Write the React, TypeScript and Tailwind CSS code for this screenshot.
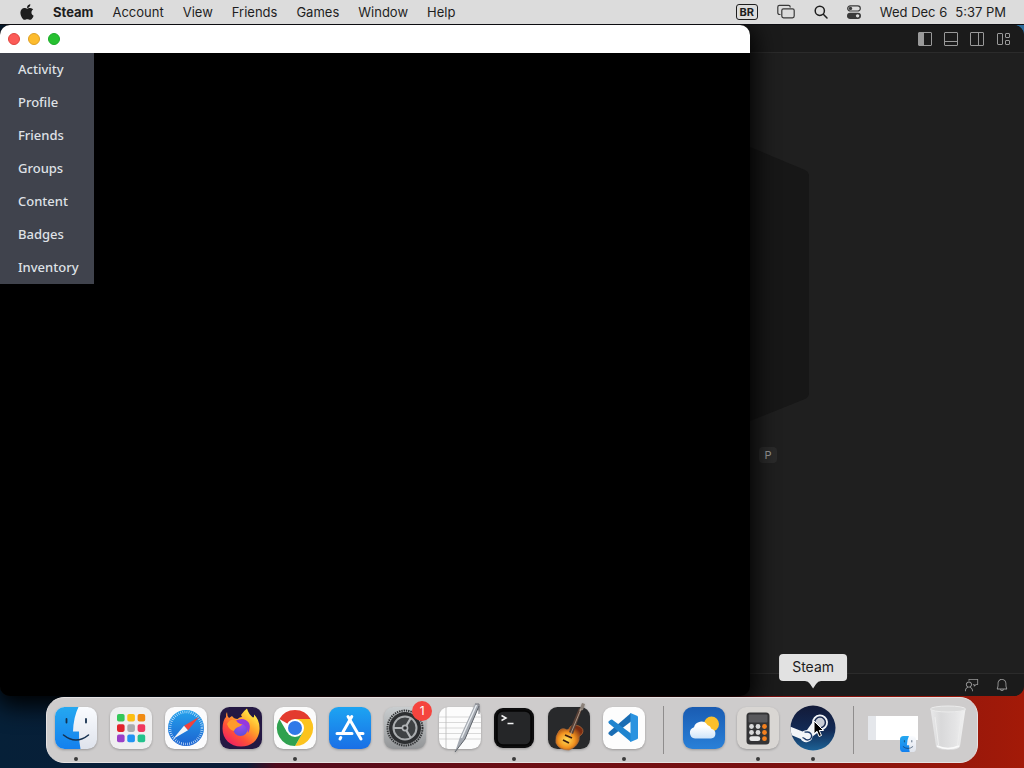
import React from "react";
import { FaApple } from "react-icons/fa";
import {
    VscBell,
    VscFeedback,
    VscLayout,
    VscLayoutPanelOff,
    VscLayoutSidebarLeft,
    VscLayoutSidebarRightOff,
} from "react-icons/vsc";

interface DockApp {
    name: string;
    icon: React.ReactNode;
    running?: boolean;
    badge?: number;
    tooltip?: boolean;
}

const menus = ["Account", "View", "Friends", "Games", "Window", "Help"];
const profileLinks = ["Activity", "Profile", "Friends", "Groups", "Content", "Badges", "Inventory"];

const iconClass = "w-[42px] h-[42px] overflow-visible drop-shadow-[0_1px_1px_rgba(0,0,0,0.25)]";

const FinderIcon = ({ className = iconClass }: { className?: string }) => (
    <svg viewBox="0 0 42 42" className={className}>
        <defs>
            <linearGradient id="finder-blue" x1="0" y1="0" x2="0" y2="1">
                <stop offset="0" stopColor="#25a8f0" />
                <stop offset="1" stopColor="#1480ee" />
            </linearGradient>
            <linearGradient id="finder-white" x1="0" y1="0" x2="0" y2="1">
                <stop offset="0" stopColor="#fafcff" />
                <stop offset="1" stopColor="#dfe3ec" />
            </linearGradient>
        </defs>
        <rect width="42" height="42" rx="9.5" fill="url(#finder-white)" />
        <path d="M9.5 0H23.5Q18.5 10 18 24.5H24Q23.5 33 25.5 42H9.5A9.5 9.5 0 0 1 0 32.5V9.5A9.5 9.5 0 0 1 9.5 0Z" fill="url(#finder-blue)" />
        <path d="M11.5 12v3.5M31 12v3.5" stroke="#15304f" strokeWidth="1.8" strokeLinecap="round" />
        <path d="M8.5 28Q21 38 33.5 28" fill="none" stroke="#15304f" strokeWidth="1.6" strokeLinecap="round" />
    </svg>
);

const launchpadColors = ["#35c759", "#fcbf12", "#f08a12", "#e2232c", "#a9abad", "#f0385f", "#9a3fc8", "#2193f3", "#22c28c"];

const LaunchpadIcon = () => (
    <svg viewBox="0 0 42 42" className={iconClass}>
        <rect width="42" height="42" rx="9.5" fill="#efeff0" />
        {launchpadColors.map((color, i) => (
            <rect key={color} x={7 + (i % 3) * 10.3} y={7 + Math.floor(i / 3) * 10.3} width="7.6" height="7.6" rx="1.8" fill={color} />
        ))}
    </svg>
);

const SafariIcon = () => (
    <svg viewBox="0 0 42 42" className={iconClass}>
        <defs>
            <linearGradient id="safari" x1="0" y1="0" x2="0" y2="1">
                <stop offset="0" stopColor="#25a2ec" />
                <stop offset="1" stopColor="#1b62d0" />
            </linearGradient>
        </defs>
        <rect width="42" height="42" rx="9.5" fill="#fbfbfc" />
        <circle cx="21" cy="21" r="18" fill="url(#safari)" />
        <circle cx="21" cy="21" r="16" fill="none" stroke="#e6f3ff" strokeWidth="2.6" strokeDasharray="0.6 1.5" />
        <path d="M34 10 23 23.3 19 18.7Z" fill="#f0413c" />
        <path d="M8 32 19 18.7 23 23.3Z" fill="#f3f5f7" />
    </svg>
);

const FirefoxIcon = () => (
    <svg viewBox="0 0 42 42" className={iconClass}>
        <defs>
            <linearGradient id="fox" x1="0.85" y1="0.1" x2="0.2" y2="0.95">
                <stop offset="0" stopColor="#fff04a" />
                <stop offset="0.35" stopColor="#ffa62a" />
                <stop offset="0.68" stopColor="#ff5138" />
                <stop offset="1" stopColor="#ef2060" />
            </linearGradient>
            <radialGradient id="globe" cx="0.5" cy="0.25" r="0.8">
                <stop offset="0" stopColor="#a24cf2" />
                <stop offset="1" stopColor="#5a4fd8" />
            </radialGradient>
        </defs>
        <rect width="42" height="42" rx="9.5" fill="#241843" />
        <path d="M7 5Q7 9 9 11L12 9Q14 12 17.500 12Q19.500 10 22 10L21 8Q23.500 4 27 1.500Q28.500 7 33 10.500Q34.500 10 34 7.500Q40 13 39.500 22.500C39 33.500 31 39.500 21 39.500C10 39.500 2.500 32 2.500 21.500C2.500 16 4 12 6 10Q5.500 7 7 5Z" fill="url(#fox)" />
        <circle cx="20.500" cy="21.500" r="7.500" fill="url(#globe)" />
        <path d="M7 17Q10 12 14 13L18 15.500Q20 17 22.500 17Q21 19.500 17 20.500Q14.500 21.500 14 24Q9 23 7 17Z" fill="#ff9a2c" />
        <path d="M16 13.500Q24 9.500 29 16Q31 21 28 26Q27.500 20 23.500 17.500Q20.500 17.500 18 15.500Z" fill="#9638dd" />
    </svg>
);

const ChromeIcon = () => (
    <svg viewBox="0 0 42 42" className={iconClass}>
        <rect width="42" height="42" rx="9.5" fill="#fbfbfb" />
        <path d="M21 21 5.400 12A18 18 0 0 1 36.600 12Z" fill="#e33b2e" />
        <path d="M21 12H36.600A18 18 0 0 1 21 39L28.800 25.500Z" fill="#fcc31e" />
        <path d="M5.400 12A18 18 0 0 0 21 39L28.800 25.500 21 21 13.200 25.500Z" fill="#2fa14f" />
        <circle cx="21" cy="21" r="9" fill="#fff" />
        <circle cx="21" cy="21" r="7" fill="#3079e8" />
    </svg>
);

const AppStoreIcon = () => (
    <svg viewBox="0 0 42 42" className={iconClass}>
        <defs>
            <linearGradient id="store" x1="0" y1="0" x2="0" y2="1">
                <stop offset="0" stopColor="#1ca4f2" />
                <stop offset="1" stopColor="#1a6fe6" />
            </linearGradient>
        </defs>
        <rect width="42" height="42" rx="9.5" fill="url(#store)" />
        <g stroke="#fff" strokeWidth="3" strokeLinecap="round" fill="none">
            <path d="M22.800 9.500 14 25M19 9.500 32 32" />
            <path d="M8 26.500H23M29.500 26.500H34" />
            <path d="M11.800 30.500 11 32" />
        </g>
    </svg>
);

const SettingsIcon = () => (
    <svg viewBox="0 0 42 42" className={iconClass}>
        <defs>
            <linearGradient id="settings" x1="0" y1="0" x2="0" y2="1">
                <stop offset="0" stopColor="#c9cdcf" />
                <stop offset="1" stopColor="#939597" />
            </linearGradient>
        </defs>
        <rect width="42" height="42" rx="9.5" fill="url(#settings)" />
        <circle cx="21" cy="21" r="17.500" fill="none" stroke="#303234" strokeWidth="2" strokeDasharray="1.4 0.9" />
        <circle cx="21" cy="21" r="16" fill="#2c2e30" />
        <circle cx="21" cy="21" r="11.500" fill="#3e4143" stroke="#a9acae" strokeWidth="2" />
        <path d="M21 21H9.500M21 21 26.800 11M21 21 26.800 31" stroke="#b0b3b5" strokeWidth="2.200" />
        <circle cx="21" cy="21" r="2.600" fill="#2c2e30" stroke="#b0b3b5" strokeWidth="1.600" />
    </svg>
);

const TextEditIcon = () => (
    <svg viewBox="0 0 42 42" className={iconClass}>
        <rect width="42" height="42" rx="9.5" fill="#fcfcfc" />
        <path d="M0 10H42M0 15.500H42M0 21H42M0 26.500H42M0 32H42" stroke="#cfcfcf" strokeWidth="0.8" />
        <path d="M7 0V42" stroke="#b9b9b9" strokeWidth="0.8" />
        <path d="M36 -3 40 -1 26 32 16 45 21 30Z" fill="#a4a9b1" />
        <path d="M37.500 -2 22.500 31" stroke="#e9edf1" strokeWidth="1.300" />
        <path d="M40 -1 26 32 16 45" fill="none" stroke="#5d6269" strokeWidth="1" />
        <path d="M36 -3 40 -3 40 7" fill="none" stroke="#747981" strokeWidth="1" />
    </svg>
);

const TerminalIcon = () => (
    <svg viewBox="0 0 42 42" className={iconClass}>
        <rect x="1" y="1" width="40" height="40" rx="9" fill="#0d0d0e" />
        <rect x="4" y="4" width="34" height="34" rx="6" fill="#252628" stroke="#050505" strokeWidth="1.500" />
        <path d="M8.500 8.500 13 11 8.500 13.500M14.500 16.500H20.500" fill="none" stroke="#f3f3f3" strokeWidth="1.500" />
    </svg>
);

const GarageBandIcon = () => (
    <svg viewBox="0 0 42 42" className={iconClass}>
        <defs>
            <radialGradient id="guitar" cx="0.4" cy="0.6" r="0.6">
                <stop offset="0" stopColor="#ffe05a" />
                <stop offset="0.5" stopColor="#f39420" />
                <stop offset="1" stopColor="#7a2c12" />
            </radialGradient>
        </defs>
        <rect width="42" height="42" rx="9.5" fill="#28292b" />
        <path d="M11 24Q14 20 19 23Q22 22 22 20Q25 17 31 19Q37 22 34 27Q30 29 31 33Q29 40 21 43Q11 43 8 36Q7 29 11 24Z" fill="url(#guitar)" stroke="#b7703a" strokeWidth="0.7" />
        <path d="M31 1 34 2 25 27 21 25Z" fill="#594137" />
        <path d="M34 -4 37 -3 35 3 31 4Z" fill="#8b8179" />
        <path d="M33 2 21 31" stroke="#c7b9a7" strokeWidth="0.7" />
        <path d="M17 28 24 31M15 33 21 36" stroke="#3b1c10" strokeWidth="1.800" />
    </svg>
);

const CodeIcon = () => (
    <svg viewBox="0 0 42 42" className={iconClass}>
        <rect width="42" height="42" rx="9.5" fill="#fdfdfd" />
        <path d="M28 6V14.500L9 29Q8 29.500 5.500 27Q5 26 6 25Z" fill="#1a6db4" />
        <path d="M28 35V26.500L9 12.500Q8 12 5.500 14.500Q5 15.500 6 16.500Z" fill="#1f84cf" />
        <path d="M27.500 6 34.500 9Q35 9.500 35 10.500V30.500Q35 31.500 34.500 32L27.500 35Z" fill="#2b93e0" />
    </svg>
);

const WeatherIcon = () => (
    <svg viewBox="0 0 42 42" className={iconClass}>
        <defs>
            <linearGradient id="sky" x1="0" y1="0" x2="0" y2="1">
                <stop offset="0" stopColor="#1a5cb2" />
                <stop offset="1" stopColor="#2980d8" />
            </linearGradient>
            <linearGradient id="cloud" x1="0" y1="0" x2="0" y2="1">
                <stop offset="0.3" stopColor="#fff" />
                <stop offset="1" stopColor="#cfe5fa" />
            </linearGradient>
        </defs>
        <rect width="42" height="42" rx="9.5" fill="url(#sky)" />
        <circle cx="28.500" cy="17" r="7.500" fill="#fbc02c" />
        <path d="M12 31.500A5.800 5.800 0 0 1 11 20.200A7.500 7.500 0 0 1 24.500 18A6 6 0 0 1 28.500 22A4.800 4.800 0 0 1 28 31.500Z" fill="url(#cloud)" />
    </svg>
);

const CalculatorIcon = () => (
    <svg viewBox="0 0 42 42" className={iconClass}>
        <rect width="42" height="42" rx="9.5" fill="#d9d6d3" />
        <rect x="9.500" y="5.500" width="23" height="32" rx="3.500" fill="#333335" />
        <rect x="11.500" y="7.500" width="19" height="8" rx="1" fill="#59595c" />
        {[19.5, 25.5].map((y) => (
            <g key={y}>
                <circle cx="14.500" cy={y} r="2.400" fill="#d9d9da" />
                <circle cx="21" cy={y} r="2.400" fill="#d9d9da" />
                <circle cx="27.500" cy={y} r="2.400" fill="#f5811f" />
            </g>
        ))}
        <rect x="12.300" y="29.300" width="11" height="4.800" rx="2.400" fill="#e6e6e6" />
        <circle cx="27.500" cy="31.700" r="2.400" fill="#f5811f" />
    </svg>
);

const SteamIcon = () => (
    <svg viewBox="0 0 46 46" className="w-[46px] h-[46px]">
        <defs>
            <linearGradient id="steam" x1="0" y1="0" x2="0" y2="1">
                <stop offset="0" stopColor="#131a38" />
                <stop offset="0.55" stopColor="#122a55" />
                <stop offset="1" stopColor="#1d6296" />
            </linearGradient>
            <clipPath id="steam-clip">
                <circle cx="23" cy="23" r="22.500" />
            </clipPath>
        </defs>
        <circle cx="23" cy="23" r="22.500" fill="url(#steam)" />
        <g clipPath="url(#steam-clip)">
            <path d="M0 21.500 12.500 26.500Q14.500 25 17 25L22 18A8 8 0 1 1 30.500 25.500L22.500 31.500A6.300 6.300 0 0 1 10.800 34L0 29.500Z" fill="#f3f5f8" />
        </g>
        <circle cx="30" cy="17.500" r="5.400" fill="#c9cdd6" stroke="#1a2a50" strokeWidth="1.500" />
        <path d="M12.500 32.500 14.500 33.500A4 4 0 1 0 17.500 27L14.500 27.200" fill="none" stroke="#1d3a68" strokeWidth="1.300" />
    </svg>
);

const TrashIcon = () => (
    <svg viewBox="0 0 38 46" className="w-[38px] h-[46px]">
        <defs>
            <linearGradient id="bin" x1="0" y1="0" x2="1" y2="0">
                <stop offset="0" stopColor="#e9e9ea" />
                <stop offset="0.3" stopColor="#d9d9da" />
                <stop offset="0.7" stopColor="#e4e4e5" />
                <stop offset="1" stopColor="#f1f1f1" />
            </linearGradient>
        </defs>
        <path d="M1.500 4 7 41Q8 45 19 45Q30 45 31 41L36.500 4Z" fill="url(#bin)" />
        <ellipse cx="19" cy="4" rx="17.500" ry="3" fill="#dadada" stroke="#ececec" />
        <path d="M6 12 9.500 40M32 12 28.500 40" stroke="#eeeeee" strokeWidth="1" />
        <path d="M8 41Q19 46 30 41" fill="none" stroke="#fafafa" strokeWidth="1.500" />
    </svg>
);

const MinimizedWindow = () => (
    <span className="relative block w-[50px] h-6 bg-white">
        <span className="block w-2 h-full bg-gray-200" />
        <span className="absolute -bottom-3 right-0.5">
            <FinderIcon className="w-4 h-4" />
        </span>
    </span>
);

const pinnedApps: DockApp[] = [
    { name: "Finder", icon: <FinderIcon />, running: true },
    { name: "Launchpad", icon: <LaunchpadIcon /> },
    { name: "Safari", icon: <SafariIcon /> },
    { name: "Firefox", icon: <FirefoxIcon /> },
    { name: "Chrome", icon: <ChromeIcon />, running: true },
    { name: "App Store", icon: <AppStoreIcon /> },
    { name: "System Settings", icon: <SettingsIcon />, badge: 1 },
    { name: "TextEdit", icon: <TextEditIcon /> },
    { name: "Terminal", icon: <TerminalIcon />, running: true },
    { name: "GarageBand", icon: <GarageBandIcon /> },
    { name: "Code", icon: <CodeIcon />, running: true },
];

const recentApps: DockApp[] = [
    { name: "Weather", icon: <WeatherIcon /> },
    { name: "Calculator", icon: <CalculatorIcon />, running: true },
    { name: "Steam", icon: <SteamIcon />, running: true, tooltip: true },
];

const stackItems: DockApp[] = [
    { name: "Minimized window", icon: <MinimizedWindow /> },
    { name: "Trash", icon: <TrashIcon /> },
];

const DockItem = ({ app }: { app: DockApp }) => (
    <button type="button" aria-label={app.name} className="relative flex-1 min-w-0 h-full flex flex-col items-center pt-[9px]">
        <span className="h-[42px] flex items-center justify-center">{app.icon}</span>
        {app.running && <span className="w-1 h-1 mt-2 rounded-full bg-[#3a3a3a]" />}
        {app.badge && (
            <span className="absolute top-[3px] right-0 w-5 h-5 rounded-full bg-[#f5443e] text-white text-xs leading-5 text-center">
                {app.badge}
            </span>
        )}
        {app.tooltip && (
            <span className="absolute bottom-full left-1/2 -translate-x-1/2 mb-[17px] h-[27px] px-[13px] rounded bg-[#e2e2e2] text-[#1c1c1c] text-sm leading-[26px]">
                {app.name}
                <svg viewBox="0 0 16 8" className="absolute top-full left-1/2 -translate-x-1/2 w-4 h-2">
                    <path d="M0 0H16Q13 0 11 3L8 7.500 5 3Q3 0 0 0Z" fill="#e2e2e2" />
                </svg>
            </span>
        )}
    </button>
);

const DockDivider = () => (
    <span className="w-[25px] shrink-0 flex justify-center">
        <span className="w-px h-12 bg-[#8f8d8d]" />
    </span>
);

const MenuBar = () => (
    <header className="relative z-30 h-6 flex items-center justify-between bg-[#dcdcdc] text-[#1e1e1e] text-[13px] leading-6 pl-5 pr-[18px] whitespace-nowrap shadow-[0_1px_0_#0c0c10]">
        <nav className="flex items-center gap-[19px]">
            <button type="button" aria-label="Apple">
                <FaApple className="w-[14px] h-[18px]" />
            </button>
            <button type="button" className="font-bold">Steam</button>
            {menus.map((menu) => (
                <button key={menu} type="button">{menu}</button>
            ))}
        </nav>
        <div className="flex items-center gap-[19px]">
            <button type="button" className="w-[22px] h-4 rounded-[3px] border border-[#1e1e1e] text-[11px] leading-[14px] font-bold">
                BR
            </button>
            <button type="button" aria-label="Windows">
                <svg viewBox="0 0 18 16" className="w-[18px] h-4" fill="none" stroke="#3a3a3a" strokeWidth="1.2">
                    <path d="M3.500 10.500H2.500A1.700 1.700 0 0 1 .8 8.800V3A1.700 1.700 0 0 1 2.500 1.300H11.500A1.700 1.700 0 0 1 13.200 3V3.500" />
                    <rect x="4.800" y="4.800" width="12.400" height="9" rx="1.700" />
                </svg>
            </button>
            <button type="button" aria-label="Search">
                <svg viewBox="0 0 14 14" className="w-[14px] h-[14px]" fill="none" stroke="#1e1e1e" strokeWidth="1.500" strokeLinecap="round">
                    <circle cx="5.800" cy="5.800" r="4.600" />
                    <path d="M9.300 9.300 13 13" />
                </svg>
            </button>
            <button type="button" aria-label="Control Center">
                <svg viewBox="0 0 14 14" className="w-[14px] h-[14px]">
                    <rect x="0.700" y="0.800" width="12.600" height="5.200" rx="2.600" fill="none" stroke="#3a3a3a" strokeWidth="1.200" />
                    <circle cx="3.500" cy="3.400" r="1.700" fill="#3a3a3a" />
                    <rect y="7.700" width="14" height="6.300" rx="3.150" fill="#3a3a3a" />
                    <circle cx="10.600" cy="10.850" r="1.700" fill="#dcdcdc" />
                </svg>
            </button>
            <time className="flex gap-2">
                <span>Wed Dec 6</span>
                <span>5:37 PM</span>
            </time>
        </div>
    </header>
);

const EditorWindow = () => (
    <section className="absolute inset-x-0 top-[25px] bottom-[72px] flex flex-col rounded-[10px] bg-[#1f1f1f] text-[#9a9a9a] overflow-hidden">
        <div className="h-7 shrink-0 flex items-center justify-end gap-2.5 pr-[13px] bg-[#1b1b1b] border-b border-[#2b2b2b]">
            <button type="button" aria-label="Toggle primary side bar"><VscLayoutSidebarLeft className="w-4 h-4" /></button>
            <button type="button" aria-label="Toggle panel"><VscLayoutPanelOff className="w-4 h-4" /></button>
            <button type="button" aria-label="Toggle secondary side bar"><VscLayoutSidebarRightOff className="w-4 h-4" /></button>
            <button type="button" aria-label="Customize layout"><VscLayout className="w-4 h-4" /></button>
        </div>
        <div className="flex-1 flex flex-col items-end pt-[94px]">
            <svg viewBox="0 0 110 274" className="w-[110px] h-[274px] mr-[215px]">
                <path d="M0 0H51L106 23Q110 25 110 29V246Q110 250 106 252L51 274H0Z" fill="#171717" />
            </svg>
            <kbd className="mt-[26px] mr-[247px] w-[18px] h-4 rounded-sm bg-[#2a2a2a] text-[11px] leading-4 text-center font-[inherit]">P</kbd>
        </div>
        <footer className="h-[23px] shrink-0 flex items-center justify-end gap-4 pr-[15px] bg-[#1b1b1b] border-t border-[#2b2b2b]">
            <button type="button" aria-label="Feedback"><VscFeedback className="w-[14px] h-[14px]" /></button>
            <button type="button" aria-label="Notifications"><VscBell className="w-[14px] h-[14px]" /></button>
        </footer>
    </section>
);

const SteamWindow = () => (
    <section className="absolute left-0 right-[274px] top-[25px] bottom-[72px] rounded-[10px] bg-black shadow-[0_6px_24px_4px_#000000]">
        <div className="h-7 flex items-center gap-2 pl-2 rounded-t-[10px] bg-white">
            <button type="button" aria-label="Close" className="w-3 h-3 rounded-full bg-[#fc5b57] border border-[#e0443e]" />
            <button type="button" aria-label="Minimize" className="w-3 h-3 rounded-full bg-[#fdbc2e] border border-[#dfa023]" />
            <button type="button" aria-label="Zoom" className="w-3 h-3 rounded-full bg-[#27c131] border border-[#1aab29]" />
        </div>
        <nav className="w-[94px] flex flex-col bg-[#40434d] font-['Noto_Sans',sans-serif] text-[13px] font-medium text-[#dfe1e6]">
            {profileLinks.map((link) => (
                <a key={link} href="#" className="pl-[18px] leading-[33px]">{link}</a>
            ))}
        </nav>
    </section>
);

const App = () => {
    return (
        <div className="relative h-screen overflow-hidden font-['Inter',sans-serif] bg-[linear-gradient(90deg,#062038_0%,#0a1c38_24%,#4f0a1c_27%,#6b0e14_50%,#7a1010_75%,#a31a08_100%)]">
            <div className="absolute top-0 right-0 w-8 h-12 bg-[#2b6c9c]" />
            <MenuBar />
            <EditorWindow />
            <SteamWindow />
            <footer className="absolute inset-x-[46px] bottom-[5px] h-[66px] flex items-center px-0.5 rounded-[18px] border border-[#e6e2e2] bg-[#cecccc]">
                {pinnedApps.map((app) => <DockItem key={app.name} app={app} />)}
                <DockDivider />
                {recentApps.map((app) => <DockItem key={app.name} app={app} />)}
                <DockDivider />
                {stackItems.map((app) => <DockItem key={app.name} app={app} />)}
            </footer>
            {/* mouse pointer, resting on the Steam icon */}
            <svg viewBox="0 0 12 18" className="absolute right-[199px] bottom-[30px] w-3 h-[18px]">
                <path d="M1 1V14L4 11.300 6 16.500 8.500 15.500 6.300 10.500H10.500Z" fill="#000" stroke="#fff" strokeWidth="1" />
            </svg>
        </div>
    );
};

export default App;
